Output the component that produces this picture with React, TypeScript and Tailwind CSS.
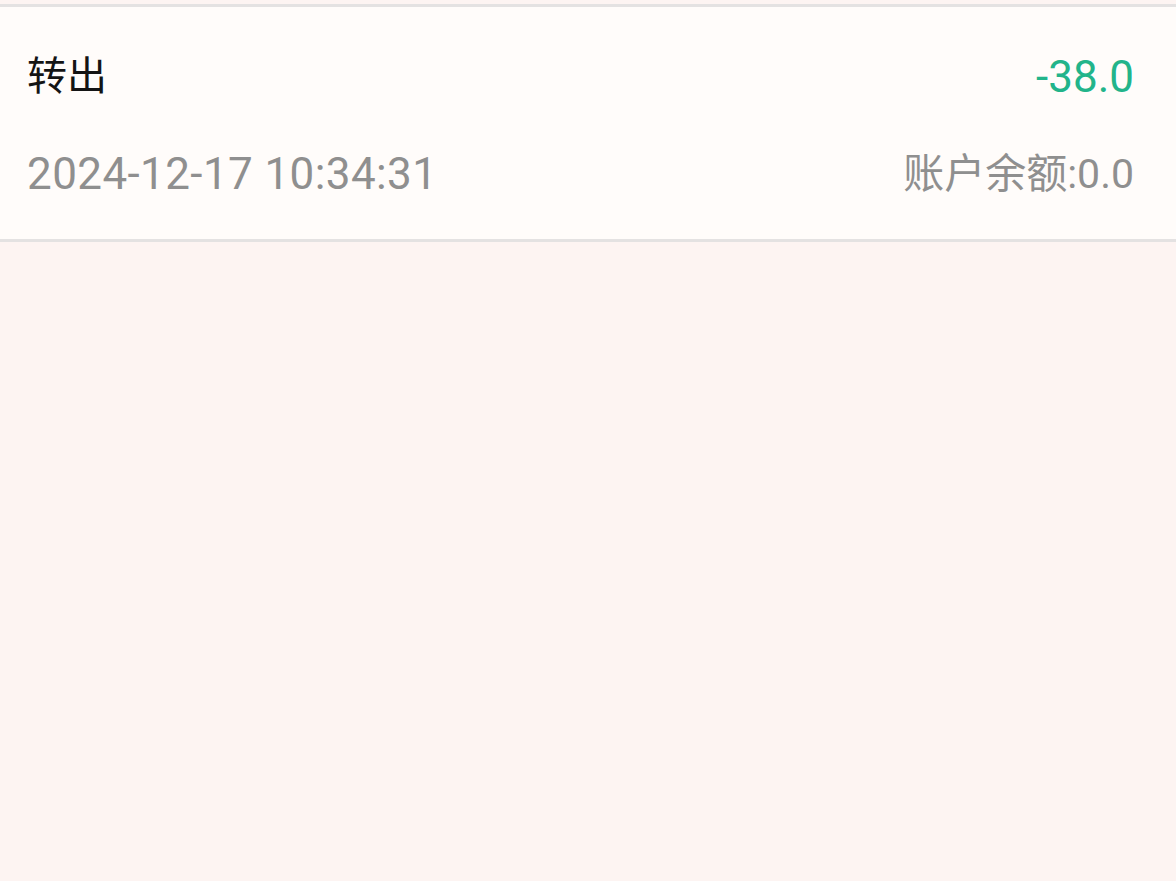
export default function App() {
  return (
    <div className="min-h-[881px] w-full bg-[#fdf4f2] pt-[4px] font-['Roboto','Noto_Sans_CJK_SC',sans-serif]">
      <div className="border-y-[3px] border-[#e4e2e2] bg-[#fffcfa] pl-[27px] pr-[42px] pt-[50px] pb-[43px]">
        <div className="flex items-center justify-between">
          <span className="text-[40px] leading-[40px] text-[#141414]">转出</span>
          <span className="text-[44px] leading-[40px] text-[#22b48a]">-38.0</span>
        </div>
        <div className="mt-[55px] flex items-center justify-between text-[44px] leading-[44px] text-[#8f8f8f]">
          <span className="tracking-[0.4px]">2024-12-17 10:34:31</span>
          <span className="text-[41px]">账户余额:0.0</span>
        </div>
      </div>
    </div>
  );
}
